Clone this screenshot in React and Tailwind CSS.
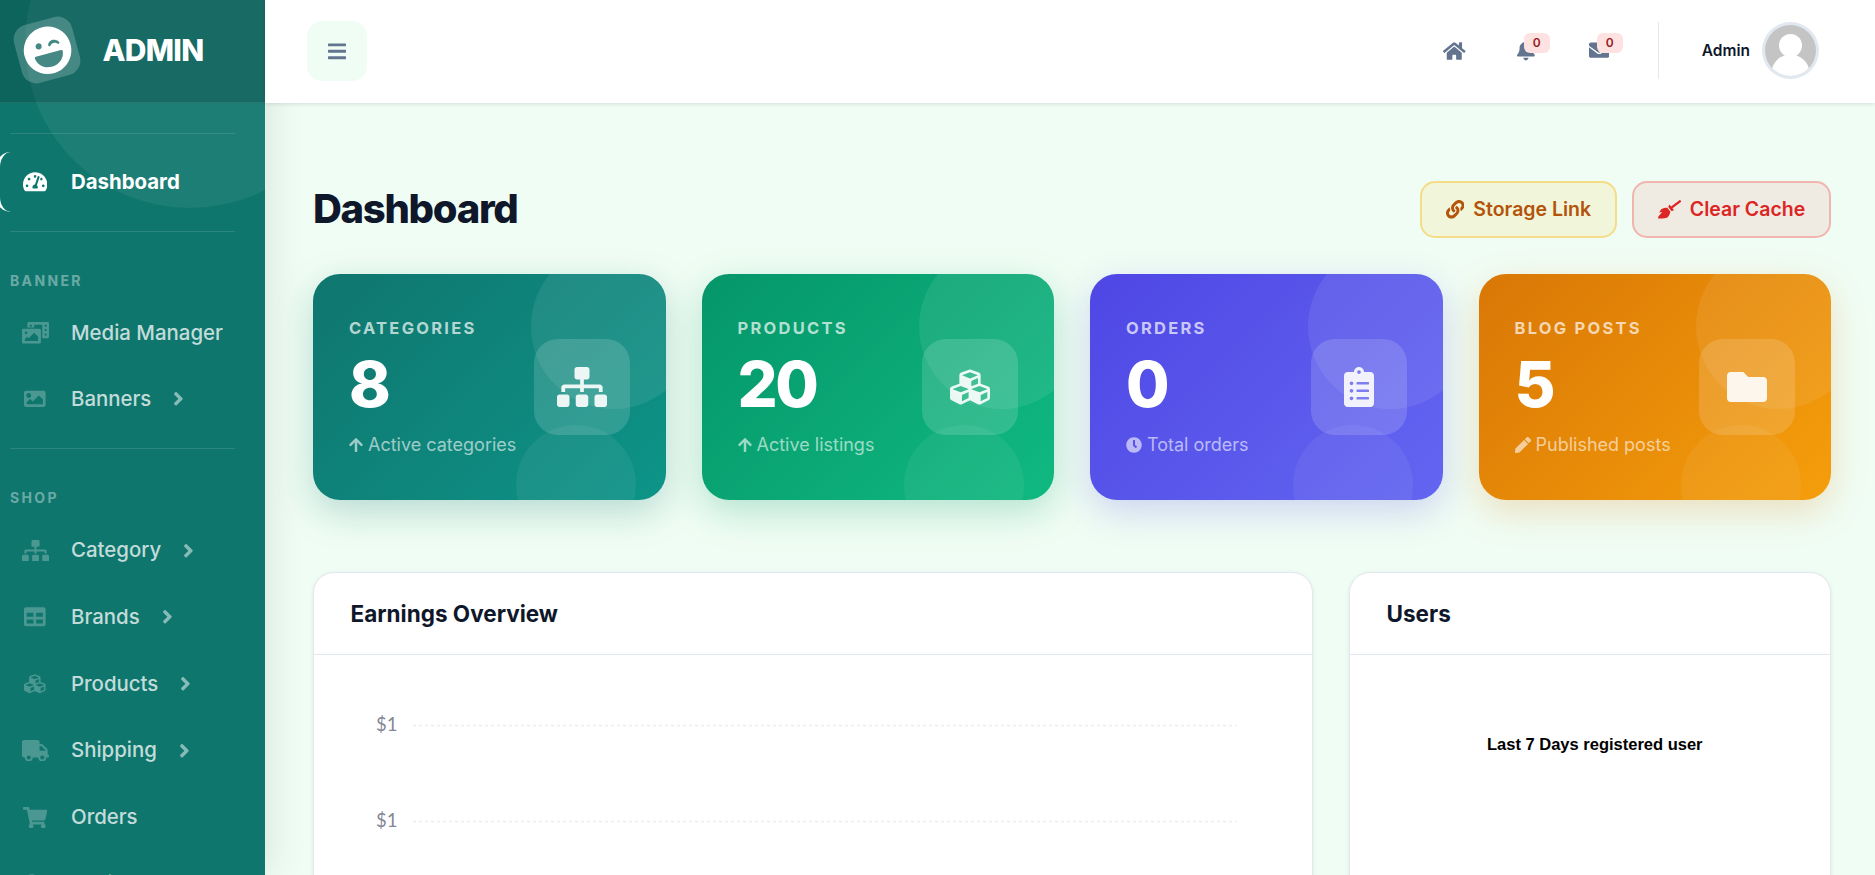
import {
    FaAngleRight,
    FaArrowUp,
    FaBars,
    FaBell,
    FaBroom,
    FaClipboardList,
    FaClock,
    FaComments,
    FaCubes,
    FaEnvelope,
    FaFolder,
    FaHome,
    FaImage,
    FaLaughWink,
    FaLink,
    FaPen,
    FaPhotoVideo,
    FaShoppingCart,
    FaSitemap,
    FaTable,
    FaTachometerAlt,
    FaTruck,
} from 'react-icons/fa';

// iconWidth keeps the icon's own aspect ratio at a 1em height
const bannerLinks = [
    { label: 'Media Manager', icon: FaPhotoVideo, iconWidth: 'w-[1.25em]' },
    { label: 'Banners', icon: FaImage, iconWidth: 'w-[1em]', nested: true },
];

const shopLinks = [
    { label: 'Category', icon: FaSitemap, iconWidth: 'w-[1.25em]', nested: true },
    { label: 'Brands', icon: FaTable, iconWidth: 'w-[1em]', nested: true },
    { label: 'Products', icon: FaCubes, iconWidth: 'w-[1em]', nested: true },
    { label: 'Shipping', icon: FaTruck, iconWidth: 'w-[1.25em]', nested: true },
    { label: 'Orders', icon: FaShoppingCart, iconWidth: 'w-[1.125em]' },
    { label: 'Reviews', icon: FaComments, iconWidth: 'w-[1.125em]' },
];

const stats = [
    {
        label: 'Categories',
        value: 8,
        note: 'Active categories',
        icon: FaSitemap,
        iconWidth: 'w-[1.25em]',
        noteIcon: FaArrowUp,
        noteWidth: 'w-[0.875em]',
        color: 'from-[#0f766e] to-[#0d9488] shadow-[0_12px_36px_rgba(15,118,110,0.25)]',
    },
    {
        label: 'Products',
        value: 20,
        note: 'Active listings',
        icon: FaCubes,
        iconWidth: 'w-[1em]',
        noteIcon: FaArrowUp,
        noteWidth: 'w-[0.875em]',
        color: 'from-[#059669] to-[#10b981] shadow-[0_12px_36px_rgba(5,150,105,0.25)]',
    },
    {
        label: 'Orders',
        value: 0,
        note: 'Total orders',
        icon: FaClipboardList,
        iconWidth: 'w-[0.75em]',
        noteIcon: FaClock,
        noteWidth: 'w-[1em]',
        color: 'from-[#4f46e5] to-[#6366f1] shadow-[0_12px_36px_rgba(79,70,229,0.22)]',
    },
    {
        label: 'Blog Posts',
        value: 5,
        note: 'Published posts',
        icon: FaFolder,
        iconWidth: 'w-[1em]',
        noteIcon: FaPen,
        noteWidth: 'w-[1em]',
        color: 'from-[#d97706] to-[#f59e0b] shadow-[0_12px_36px_rgba(217,119,6,0.22)]',
    },
];

function NavLink({ label, icon: Icon, iconWidth, nested }) {
    return (
        <a href="#" className="flex h-[60px] items-center text-[20.4px] font-medium text-white/75">
            <span className="flex w-[70px] justify-center">
                <Icon className={`${iconWidth} text-[21.6px] text-white/25`} />
            </span>
            <span className="ml-[1px] whitespace-nowrap">{label}</span>
            {nested && <FaAngleRight className="ml-[22px] w-[0.5em] text-[21.6px] text-white/50" />}
        </a>
    );
}

function Sidebar() {
    return (
        <aside className="relative z-20 h-full w-[265px] shrink-0 overflow-hidden bg-[#0f766e] shadow-[6px_0_36px_rgba(0,0,0,0.09)]">
            <div className="absolute -top-[122px] left-[25px] size-[330px] rounded-full bg-white/6" />

            <div className="relative flex h-[103px] items-center border-b border-white/8 bg-black/15 pb-[3px]">
                <div className="ml-[17px] flex size-[60px] -rotate-15 items-center justify-center rounded-[15px] bg-white/20">
                    <FaLaughWink className="text-[49px] text-white" />
                </div>
                <span className="mt-[2px] ml-[25.5px] text-[30px] font-extrabold tracking-[-0.75px] text-white">
                    ADMIN
                </span>
            </div>

            <hr className="mt-[30px] mr-[30px] ml-[10px] border-white/12" />
            <a
                href="#"
                className="relative mt-[18px] -ml-[4.5px] flex h-[60px] items-center rounded-[15px] border-l-[4.5px] border-white text-[20.4px] font-bold text-white"
            >
                <span className="flex w-[71.5px] justify-center">
                    <FaTachometerAlt className="w-[1.125em] text-[21.6px]" />
                </span>
                <span>Dashboard</span>
            </a>
            <hr className="mt-[19px] mr-[30px] ml-[10px] border-white/12" />

            <h6 className="mt-[39px] ml-[10px] text-[14px] leading-[20px] font-bold tracking-[2.35px] text-white/40">
                BANNER
            </h6>
            <nav className="mt-[12px] flex flex-col gap-[6px]">
                {bannerLinks.map((l) => (
                    <NavLink key={l.label} {...l} />
                ))}
            </nav>
            <hr className="mt-[19px] mr-[30px] ml-[10px] border-white/12" />

            <h6 className="mt-[39px] ml-[10px] text-[14px] leading-[20px] font-bold tracking-[2.35px] text-white/40">
                SHOP
            </h6>
            <nav className="mt-[12.6px] flex flex-col gap-[6.7px]">
                {shopLinks.map((l) => (
                    <NavLink key={l.label} {...l} />
                ))}
            </nav>
        </aside>
    );
}

function AlertIcon({ icon: Icon, iconWidth, count }) {
    return (
        <div className="relative flex h-[60px] w-[73px] items-center justify-center">
            <Icon className={`${iconWidth} text-[20.4px] text-slate-500`} />
            <span className="absolute top-[12.5px] left-[34px] flex h-[20px] w-[26px] items-center justify-center rounded-[6px] bg-[#fee2e2] text-[12px] font-semibold text-[#991b1b]">
                {count}
            </span>
        </div>
    );
}

function Topbar() {
    return (
        <header className="relative z-30 flex h-[103px] shrink-0 items-center bg-white pr-[56px] pb-[2px] pl-[42px] shadow-[0_1px_4px_rgba(0,0,0,0.12)]">
            <button className="mt-[1px] flex size-[60px] items-center justify-center rounded-[15px] bg-[#f0fdf4]">
                <FaBars className="w-[0.875em] text-[20.6px] text-slate-500" />
            </button>
            <div className="ml-auto flex items-center">
                <FaHome className="mr-[24px] w-[1.125em] text-[20px] text-slate-500" />
                <AlertIcon icon={FaBell} iconWidth="w-[0.875em]" count={0} />
                <AlertIcon icon={FaEnvelope} iconWidth="w-[1em]" count={0} />
                <div className="ml-[22px] h-[57px] w-px bg-slate-200" />
                <span className="ml-[43px] text-[15.5px] font-semibold text-slate-900">Admin</span>
                <svg className="ml-[12px] size-[57px]" viewBox="0 0 57 57">
                    <clipPath id="avatar">
                        <circle cx="28.5" cy="28.5" r="25.5" />
                    </clipPath>
                    <circle cx="28.5" cy="28.5" r="28.5" fill="#e2e8f0" />
                    <g clipPath="url(#avatar)">
                        <rect width="57" height="57" fill="#c4c4c4" />
                        <ellipse cx="28.5" cy="51" rx="19" ry="18.5" fill="#fff" />
                        <circle cx="28.5" cy="23.5" r="11.5" fill="#fff" />
                    </g>
                </svg>
            </div>
        </header>
    );
}

function StatCard({ label, value, note, icon: Icon, iconWidth, noteIcon: NoteIcon, noteWidth, color }) {
    return (
        <div className={`relative rounded-[27px] bg-linear-135 ${color}`}>
            <div className="absolute inset-0 overflow-hidden rounded-[27px]">
                <div className="absolute -top-[30px] -right-[30px] size-[165px] rounded-full bg-white/8" />
                <div className="absolute right-[30px] -bottom-[45px] size-[120px] rounded-full bg-white/6" />
            </div>
            <div className="relative flex h-[226px] items-center justify-between px-[36px]">
                <div className="text-white">
                    <div className="text-[16.5px] leading-[25px] font-bold tracking-[2.25px] text-white/70 uppercase">
                        {label}
                    </div>
                    <div className="mt-[12px] text-[63px] leading-[63px] font-extrabold tracking-[-2.5px]">
                        {value}
                    </div>
                    <div className="mt-[15px] flex items-center text-[18px] leading-[27px] text-white/60">
                        <NoteIcon className={`mr-[5px] text-[16px] ${noteWidth}`} />
                        {note}
                    </div>
                </div>
                <div className="flex size-[96px] items-center justify-center rounded-[24px] bg-white/15">
                    <Icon className={`text-[40px] text-white/90 ${iconWidth}`} />
                </div>
            </div>
        </div>
    );
}

function Panel({ title, children }) {
    return (
        <section className="h-[420px] rounded-[21px] border border-slate-200 bg-white shadow-[0_1px_4px_rgba(0,0,0,0.08)]">
            <h2 className="flex h-[82px] items-center border-b border-slate-200 px-[36.5px] text-[22.5px] font-bold text-slate-900">
                {title}
            </h2>
            {children}
        </section>
    );
}

export default function App() {
    return (
        <div className="flex h-[875px] w-[1875px] overflow-hidden bg-[#f0fdf4] font-['Inter',sans-serif]">
            <Sidebar />
            <div className="flex min-w-0 flex-1 flex-col">
                <Topbar />
                <main className="pt-[78px] pr-[44px] pl-[48px]">
                    <div className="flex h-[57px] items-center justify-between">
                        <h1 className="-mt-[2px] text-[40px] font-extrabold tracking-[-1.3px] text-slate-900">
                            Dashboard
                        </h1>
                        <div className="flex gap-[15px] text-[19.5px] font-semibold">
                            <button className="flex h-[57px] w-[197px] items-center justify-center gap-[9px] rounded-[15px] border-2 border-[#fbbf24]/45 bg-[#fbbf24]/13 text-[#b45309]">
                                <FaLink className="text-[18.5px]" />
                                Storage Link
                            </button>
                            <button className="flex h-[57px] w-[199px] items-center justify-center gap-[9px] rounded-[15px] border-2 border-[#ef4444]/32 bg-[#ef4444]/10 text-[#dc2626]">
                                <FaBroom className="w-[1.25em] text-[18.5px]" />
                                Clear Cache
                            </button>
                        </div>
                    </div>

                    <div className="mt-[36px] grid grid-cols-4 gap-[36px]">
                        {stats.map((s) => (
                            <StatCard key={s.label} {...s} />
                        ))}
                    </div>

                    <div className="mt-[72px] grid grid-cols-[1000px_1fr] gap-[36px]">
                        <Panel title="Earnings Overview">
                            <svg
                                className="block h-[220px] w-full font-['Lato',sans-serif]"
                                viewBox="0 0 998 220"
                            >
                                {[70.5, 166.5].map((y) => (
                                    <g key={y}>
                                        <text x="83.5" y={y + 5} textAnchor="end" fontSize="18.5" fill="#858796">
                                            $1
                                        </text>
                                        <line
                                            x1="99"
                                            x2="922.5"
                                            y1={y}
                                            y2={y}
                                            stroke="#eaecf4"
                                            strokeWidth="1.5"
                                            strokeDasharray="3 3"
                                        />
                                    </g>
                                ))}
                            </svg>
                        </Panel>
                        <Panel title="Users">
                            <p className="mt-[77px] ml-[137px] font-['Liberation_Sans',Arial,sans-serif] text-[16.5px] font-bold text-black">
                                Last 7 Days registered user
                            </p>
                        </Panel>
                    </div>
                </main>
            </div>
        </div>
    );
}
